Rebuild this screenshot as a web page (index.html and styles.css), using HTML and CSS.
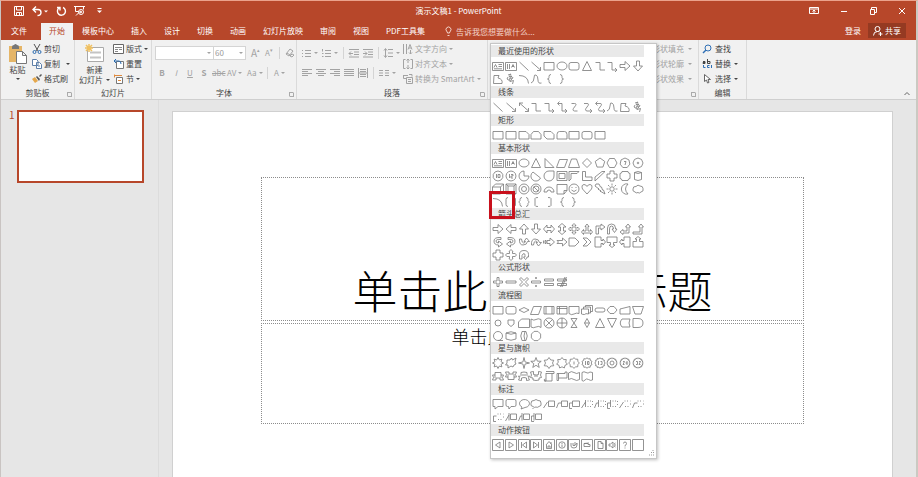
FILE: index.html
```html
<!DOCTYPE html>
<html lang="zh-CN">
<head>
<meta charset="utf-8">
<title>演示文稿1 - PowerPoint</title>
<link rel="stylesheet" href="styles.css">
</head>
<body>
<div class="window">
<header class="titlebar">
  <div class="quick">
    <button class="ic q-save" aria-label="保存"><svg width="10" height="10" viewBox="0 0 10 10"><path d="M.5.5h9v9h-9zM2.500.5v3.500h5v-3.500M2.500 9.500v-3h5v3M5.500 7v2"/></svg></button>
    <button class="ic q-undo" aria-label="撤消"><svg width="16" height="10" viewBox="0 0 16 10"><path d="M4 .5l-3 3 3 3M1 3.500h5q3 0 3 3t-3.500 3" stroke-width="1.400"/><path class="fill" d="M12 4.500h4l-2 2z"/></svg></button>
    <button class="ic q-redo" aria-label="重复"><svg width="10" height="10" viewBox="0 0 10 10"><path d="M3 2a4 4 0 1 0 4-.5M1 1.500h3v3" stroke-width="1.400"/></svg></button>
    <button class="ic q-show" aria-label="从头开始放映"><svg width="11" height="10" viewBox="0 0 11 10"><path d="M0 .5h11M1.500.5v5h3M9.500.5v3M2 9.500l3-3"/><circle cx="7" cy="6" r="2.500"/><path d="M6 5v2l2-1z"/></svg></button>
    <button class="ic q-more" aria-label="自定义快速访问工具栏"><svg width="5" height="6" viewBox="0 0 5 6"><path d="M.5.5h4"/><path class="fill" d="M0 2.500h5l-2.500 2.500z"/></svg></button>
  </div>
  <h1 class="doc">演示文稿1 - PowerPoint</h1>
  <div class="sys">
    <button class="ic" aria-label="功能区显示选项"><svg width="10" height="8" viewBox="0 0 10 8"><path d="M.5.5h9v6h-9zM.5 2h9M5 6V3M3.500 4.500l1.500-1.500 1.500 1.500"/></svg></button>
    <button class="ic" aria-label="最小化"><svg width="8" height="8" viewBox="0 0 8 8"><path d="M1 4.500h6"/></svg></button>
    <button class="ic" aria-label="向下还原"><svg width="8" height="8" viewBox="0 0 8 8"><path d="M1.500 2.500h4v5h-4zM2.500 2.500v-2h5v5h-2"/></svg></button>
    <button class="ic" aria-label="关闭"><svg width="8" height="8" viewBox="0 0 8 8"><path d="M1 1l6 6M7 1l-6 6"/></svg></button>
  </div>
</header>
<nav class="tabs">
  <a href="#" class="tab file">文件</a>
  <a href="#" class="tab active">开始</a>
  <a href="#" class="tab">模板中心</a>
  <a href="#" class="tab">插入</a>
  <a href="#" class="tab">设计</a>
  <a href="#" class="tab">切换</a>
  <a href="#" class="tab">动画</a>
  <a href="#" class="tab">幻灯片放映</a>
  <a href="#" class="tab">审阅</a>
  <a href="#" class="tab">视图</a>
  <a href="#" class="tab">PDF工具集</a>
  <a href="#" class="tab tell"><svg width="7" height="9" viewBox="0 0 7 9"><path d="M2.500 6q0-1-1-2a2.500 2.500 0 1 1 4 0q-1 1-1 2zM2.500 8.500h2"/></svg>告诉我您想要做什么...</a>
  <span class="account">
    <a href="#" class="login">登录</a>
    <button class="share"><svg width="10" height="10" viewBox="0 0 10 10"><circle cx="4.500" cy="3" r="2.500"/><path d="M.5 9.500q0-4 4-4 1.500 0 2 .5M7.500 6v4M5.500 8h4"/></svg>共享</button>
  </span>
</nav>
<div class="ribbon">
  <section class="group g-clip">
    <div class="tools">
      <button class="big"><svg width="19" height="20" viewBox="0 0 19 20"><path fill="#e5b567" d="M1 2h13v16H1z"/><path fill="#777" d="M4 3q0-2 2-2 1.500-2 3 0 2 0 2 2v2H4z"/><path fill="#fff" stroke="#777" d="M8.500 7.500h6l4 4v8h-10zM14.500 7.500v4h4"/></svg><span>粘贴</span><i class="dd"></i></button>
      <div class="stack">
        <button class="sm"><svg width="10" height="10" viewBox="0 0 10 10"><path stroke="#555" d="M2 0l4 7M8 0L4 7"/><circle cx="2.500" cy="8" r="1.500" stroke="#2b6cb0"/><circle cx="7.500" cy="8" r="1.500" stroke="#2b6cb0"/></svg>剪切</button>
        <button class="sm wide"><svg width="10" height="10" viewBox="0 0 10 10"><path fill="#fff" stroke="#5d7fa8" d="M.5.5h4l1.500 1.500v4.500h-5.500zM4.500 3.500h3l2 2v4h-5z"/><path stroke="#5d7fa8" d="M6 7h2"/></svg>复制<i class="dd"></i></button>
        <button class="sm"><svg width="10" height="10" viewBox="0 0 10 10"><path fill="#e5a84c" d="M0 5l3-2 3 4-3 2z"/><path fill="#555" d="M4 3l1-1 3 3-1 2zM7 2l2-2 1 1-2 2z"/></svg>格式刷</button>
      </div>
    </div>
    <h2>剪贴板</h2><span class="launch"></span>
  </section>
  <section class="group g-slides">
    <div class="tools">
      <button class="big new"><svg width="20" height="18" viewBox="0 0 20 18"><path fill="#fff" stroke="#aaa" d="M2.500 3.500h16v14h-16z"/><path stroke="#c4c4c4" d="M5 8.500h11M5 13.500h11" stroke-width="2"/><path stroke="#f0c060" stroke-width="1.500" d="M4 0v8M0 4h8M1 1l6 6M7 1L1 7"/></svg><span>新建</span><span>幻灯片<i class="dd"></i></span></button>
      <div class="stack">
        <button class="sm"><svg width="11" height="10" viewBox="0 0 11 10"><path fill="#fff" stroke="#666" d="M.5.5h10v9H.5z"/><path stroke="#888" d="M2 3.500h7M2 5.500h3M6 5.500h3M2 7.500h3"/></svg>版式<i class="dd"></i></button>
        <button class="sm"><svg width="11" height="10" viewBox="0 0 11 10"><path fill="#fff" stroke="#777" d="M3.500 2.500h7v7h-7z"/><path stroke="#2b6cb0" d="M3 0L1 2l2 2M1 2h5q2 0 2 3"/></svg>重置</button>
        <button class="sm"><svg width="11" height="10" viewBox="0 0 11 10"><path fill="#fff" stroke="#777" d="M3.500 3.500h6v6h-6z"/><path stroke="#e08a3c" d="M1.500.5v3M1 1.500h8M5 6.500h3"/></svg>节<i class="dd"></i></button>
      </div>
    </div>
    <h2>幻灯片</h2>
  </section>
  <section class="group g-font off">
    <div class="rows">
      <div class="row">
        <label class="combo face"><select aria-label="字体" disabled><option></option></select><i class="dd"></i></label>
        <label class="combo size"><select aria-label="字号" disabled><option>60</option></select><i class="dd"></i></label>
        <button class="t grow" aria-label="增大字号">A<sup>▴</sup></button>
        <button class="t shrink" aria-label="减小字号">A<sup>▾</sup></button>
        <span class="vr"></span>
        <button class="t clear" aria-label="清除格式"><svg width="9" height="10" viewBox="0 0 9 10"><path d="M1 6l4-5 3 2-4 5zM2 5l3 2M5 8l2-2 2 1-2 2z"/></svg></button>
      </div>
      <div class="row marks">
        <button class="t mark"><b>B</b></button><button class="t mark"><em>I</em></button><button class="t mark"><u>U</u></button><button class="t mark"><b>S</b></button><button class="t strike"><s>abc</s></button><button class="t menu-btn">AV<i class="dd"></i></button><button class="t menu-btn">Aa<i class="dd"></i></button><span class="vr"></span><button class="t color">A<i class="dd"></i></button>
      </div>
    </div>
    <h2>字体</h2><span class="launch"></span>
  </section>
  <section class="group g-para off">
    <div class="tools">
    <div class="rows">
      <div class="row">
        <button class="t" aria-label="项目符号"><svg width="9" height="9" viewBox="0 0 9 9"><path d="M0 1.500h1M3 1.500h6M0 4.500h1M3 4.500h6M0 7.500h1M3 7.500h6"/></svg><i class="dd"></i></button>
        <button class="t" aria-label="编号"><svg width="9" height="9" viewBox="0 0 9 9"><path d="M.5 0v2.500M3 1.500h6M0 4.500h1.500M3 4.500h6M0 7.500h1.500M3 7.500h6"/></svg><i class="dd"></i></button>
        <span class="vr"></span>
        <button class="t" aria-label="减少缩进"><svg width="10" height="9" viewBox="0 0 10 9"><path d="M0 .5h10M5 3h5M5 5.500h5M0 8h10M4 4.500H0M2 2.500l-2 2 2 2"/></svg></button>
        <button class="t" aria-label="增加缩进"><svg width="10" height="9" viewBox="0 0 10 9"><path d="M0 .5h10M5 3h5M5 5.500h5M0 8h10M0 4.500h4M2 2.500l2 2-2 2"/></svg></button>
        <span class="vr"></span>
        <button class="t" aria-label="行距"><svg width="9" height="10" viewBox="0 0 9 10"><path d="M1.500 1v8M0 2.500l1.500-2 1.500 2M0 7.500l1.500 2 1.500-2M4 1.500h5M4 5h5M4 8.500h5"/></svg><i class="dd"></i></button>
      </div>
      <div class="row">
        <button class="t" aria-label="左对齐"><svg width="10" height="8" viewBox="0 0 10 8"><path d="M0 .5h10M0 2.500h6M0 4.500h10M0 6.500h6"/></svg></button>
        <button class="t" aria-label="居中"><svg width="10" height="8" viewBox="0 0 10 8"><path d="M0 .5h10M2 2.500h6M0 4.500h10M2 6.500h6"/></svg></button>
        <button class="t" aria-label="右对齐"><svg width="10" height="8" viewBox="0 0 10 8"><path d="M0 .5h10M4 2.500h6M0 4.500h10M4 6.500h6"/></svg></button>
        <button class="t" aria-label="两端对齐"><svg width="10" height="8" viewBox="0 0 10 8"><path d="M0 .5h10M0 2.500h10M0 4.500h10M0 6.500h10"/></svg></button>
        <button class="t" aria-label="分散对齐"><svg width="10" height="10" viewBox="0 0 10 10"><path d="M.5 0v10M9.500 0v10M2 1.500h6M2 3.500h6M2 6.500h6M2 8.500h6M0 5h10"/></svg></button>
        <span class="vr"></span>
        <button class="t" aria-label="分栏"><svg width="10" height="6" viewBox="0 0 10 6"><path d="M0 .5h4M6 .5h4M0 3h4M6 3h4M0 5.500h4M6 5.500h4"/></svg><i class="dd"></i></button>
      </div>
    </div>
    <div class="stack">
      <button class="sm"><svg width="10" height="10" viewBox="0 0 10 10"><path d="M.5 0v10M3.500 0v10M5 5.500l2-5 2 5M6 4h2M7.500 6v4M6 8.500l1.500 1.500L9 8.500"/></svg>文字方向<i class="dd"></i></button>
      <button class="sm"><svg width="10" height="10" viewBox="0 0 10 10"><path d="M2.500.5h-2v9h2M7.500.5h2v9h-2M5 0v4M3.500 1.500L5 0l1.500 1.500M5 10V6M3.500 8.500L5 10l1.500-1.500"/></svg>对齐文本<i class="dd"></i></button>
      <button class="sm"><svg width="10" height="10" viewBox="0 0 10 10"><path d="M0 1.500h5M.5 1.500v3h3M3.500 3.500h6v6h-6zM5 5.500h3M5 7.500h3M6 .5h3v2"/></svg>转换为 SmartArt<i class="dd"></i></button>
    </div>
    </div>
    <h2>段落</h2><span class="launch"></span>
  </section>
  <section class="group g-draw off">
    <div class="stack">
      <button class="sm">形状填充<i class="dd"></i></button>
      <button class="sm">形状轮廓<i class="dd"></i></button>
      <button class="sm">形状效果<i class="dd"></i></button>
    </div>
    <span class="launch"></span>
    <div class="menu" id="shape-menu"></div>
  </section>
  <section class="group g-edit">
    <div class="stack">
      <button class="sm"><svg width="10" height="10" viewBox="0 0 10 10"><circle cx="6" cy="4" r="3" stroke="#2f6fb5"/><path stroke="#2f6fb5" stroke-width="1.500" d="M4 6L1 9"/></svg>查找</button>
      <button class="sm wide"><svg width="10" height="10" viewBox="0 0 10 10"><path stroke="#444" d="M1 2.500h2v2H1v-1h2M5.500 0v4.500h2.500v-2H6"/><path stroke="#2f6fb5" d="M1.500 6v2.500h2M7.500 6.500h-2v2h2M9.500 6v3"/></svg>替换<i class="dd"></i></button>
      <button class="sm"><svg width="10" height="10" viewBox="0 0 10 10"><path fill="#fff" stroke="#666" d="M2.500.5v7l2-1.500 1 3 1.500-.5-1-3h2.500z"/></svg>选择<i class="dd"></i></button>
    </div>
    <h2>编辑</h2>
  </section>
  <button class="collapse" aria-label="折叠功能区"><svg width="6" height="5" viewBox="0 0 6 5"><path d="M.5 4L3 1.500 5.500 4"/></svg></button>
</div>
<main class="work">
  <aside class="thumbs"><span class="num">1</span><a href="#" class="thumb" aria-label="幻灯片 1"></a></aside>
  <article class="slide">
    <div class="holder title">单击此处添加标题</div>
    <div class="holder subtitle">单击此处添加副标题</div>
  </article>
</main>
</div>
<script src="shapes.js"></script>
</body>
</html>
```
FILE: shapes.js
```js
// Every shape is a path on a 12 x 12 grid.
const circle = (r, x = 6, y = 6) =>
  `M${x - r} ${y}a${r} ${r} 0 1 0 ${2 * r} 0a${r} ${r} 0 1 0 ${-2 * r} 0`;
const polygon = (n, r, turn = 0) => {
  let d = '';
  for (let i = 0; i < n; i++) {
    const a = (i / n) * 2 * Math.PI - Math.PI / 2 + turn;
    d += `${i ? 'L' : 'M'}${(6 + r * Math.cos(a)).toFixed(2)} ${(6 + r * Math.sin(a)).toFixed(2)}`;
  }
  return d + 'z';
};
const star = (n, outer, inner) => {
  let d = '';
  for (let i = 0; i < 2 * n; i++) {
    const a = (i / n) * Math.PI - Math.PI / 2;
    const r = i % 2 ? inner : outer;
    d += `${i ? 'L' : 'M'}${(6 + r * Math.cos(a)).toFixed(2)} ${(6 + r * Math.sin(a)).toFixed(2)}`;
  }
  return d + 'z';
};
const box = 'M1 2.500h10v7.500H1z';
const frame = 'M.5 .5h11v11H.5z';

const S = {
  textH: 'M.5 2.500h11v8H.5zM2 7.500l1.500-3 1.500 3M6.500 4.500h3.500M6.500 6.500h3.500M2 8.800h8',
  textV: 'M.5 2.500h11v8H.5zM2.500 4v5M4.500 4v5M6.500 7.500l1.500-3 1.500 3M7 6.500h2',
  line: 'M1.500 2l9 8.500', arrow: 'M1.500 2l9 8M10.500 7v3.500h-3.500', arrow2: 'M1.500 2l9 8M10.500 7v3.500h-3.500M1.500 5V2h3.500',
  rect: box, oval: 'M1 6a5 4 0 1 0 10 0a5 4 0 1 0-10 0',
  round: 'M3 2.500h6q2 0 2 2v3.500q0 2-2 2H3q-2 0-2-2V4.500q0-2 2-2z',
  tri: 'M6 1.500l4.500 9h-9z', elbow: 'M1.500 2.500h4.500v7.500h5', elbowA: 'M1.500 2.500h4.500v7.500h4.500M9 8l2 2-2 2',
  elbow2: 'M2 2.500h4v7.500h4.500M9 8l2 2-2 2M3.500 .5l-2 2 2 2',
  right: 'M1 4.500h5v-3l5 4.500-5 4.500v-3H1z', left: 'M11 4.500H6v-3L1 6l5 4.500v-3h5z',
  down: 'M4.500 1v5h-3L6 11l4.500-5h-3V1z', up: 'M4.500 11V6h-3L6 1l4.500 5h-3v5z',
  free: 'M2 2.500h5l-1 2.500q5 1 4 5.500H1.500z', scribble: 'M3 2l3-1-2 3 3-1-3 3.500 4-2-3 4 3.500-1-1 3.500M3 4l-1 2 3 2',
  arc: 'M1 2.500q9 0 9.500 8', curve: 'M1 10q3-1 3-5t2-3 2 5 3.500 3',
  lbrace: 'M8 1.500q-2 0-2 2v1q0 1.500-1.500 1.500 1.500 0 1.500 1.500v1q0 2 2 2', rbrace: 'M4 1.500q2 0 2 2v1q0 1.500 1.500 1.500-1.500 0-1.500 1.500v1q0 2-2 2',
  cv: 'M3.500 2.500h3q3 0 0 3.500t0 4h3', cvA: 'M3 2.500h3q3 0 0 3.500t0 4h4M9 8l2 2-2 2', cv2: 'M2 2.500h4q3 0 0 3.500t0 4h4M9 8l2 2-2 2M3.500 .5l-2 2 2 2',
  snip1: 'M1 2.500h7l3 3v4.500H1z', snip2: 'M3.500 2.500h5l2.500 3v4.500H1V5.500z', snipD: 'M1 2.500h7l3 3v4.500H4l-3-3z',
  rnd2: 'M3.500 2.500h5q2.500 0 2.500 3v4.500H1V5.500q0-3 2.500-3z',
  rtri: 'M2 1.500v9h9z', para: 'M3.500 2.500h8l-3 8h-8z', trap: 'M3.500 2h5l3 8.500H.5z', dia: 'M6 1.500l4.500 4.500-4.500 4.500-4.500-4.500z',
  pent: polygon(5, 5), hex: 'M3.500 1.500h5L11 6l-2.500 4.500h-5L1 6z', hept: polygon(7, 5) + 'M5 4.500h2L6 8', oct: polygon(8, 5) + circle(.8),
  dec: polygon(10, 5) + 'M4.500 4v4M6 4.500h2v3H6z', dode: polygon(12, 5) + 'M4.500 4v4M6 4.500h2v1.500H6v2h2',
  pie: 'M6 1v5h5a5 5 0 1 1-5-5z', chord: 'M3 2a5 5 0 1 0 7.500 6z', tear: 'M11 1v5a5 5 0 1 1-5-5z',
  frm: 'M1 1.500h10v9H1zM3 3.500h6v5H3z', half: 'M1 11V1.500h10l-2 2H3V9z', ell: 'M1.500 1.500h3V7H11v3.500H1.500z', diag: 'M1 11V7l7-5.500h3z',
  plus: 'M4 1h4v3h3v4H8v3H4V8H1V4h3z', plaque: 'M3 1.500h6q0 2 2 2v5q-2 0-2 2H3q0-2-2-2v-5q2 0 2-2z',
  can: 'M2.500 2.500q3.500-2 7 0v7q-3.500 2-7 0zM2.500 2.500q3.500 2 7 0', cube: 'M.5 4h8v7h-8zM.5 4l3-3h8l-3 3M11.500 1v7l-3 3',
  bevel: 'M1 1h10v10H1zM3 3h6v6H3zM1 1l2 2M11 1l-2 2M1 11l2-2M11 11l-2-2', donut: circle(5) + circle(2.5), no: circle(5) + circle(3) + 'M4 4l4 4',
  barc: 'M1 9a5 5 0 0 1 10 0H8a2 2 0 0 0-4 0z', fold: 'M1 1.500h10v6l-3 3.500H1zM8 11V7.500h3', smile: circle(5) + 'M4 4v1M8 4v1M3.500 7q2.500 3 5 0',
  heart: 'M6 11L1.500 6Q0 2 3 1.500q2 0 3 2 1-2 3-2 3 .5 1.500 4.500z', bolt: 'M2 1l3 0 1.500 3h1l1 3h1L11 11 6 8h1L4 6h1L1 3z',
  sun: circle(2.2) + 'M6 .5v2M6 9.500v2M.5 6h2M9.500 6h2M2 2l1.500 1.500M8.500 8.500l1.500 1.500M10 2L8.500 3.500M2 10l1.500-1.500', moon: 'M9 1a5.200 5.200 0 1 0 0 10Q4 6 9 1z',
  cloud: 'M3 9Q0 8 1 6q0-3 3-2.500 2-2.500 4-.5 3 0 3 2.500 1 3-2 3.500-2 2-3 .5-2 1-3-.5z',
  bracks: 'M3 1.500q-2 0-2 2v5q0 2 2 2M8 1.500q2.500 0 2.500 1v7q0 1-2.500 1', braces: 'M4 1.500q-2 0-2 2v1L.8 6 2 7.500v1q0 2 2 2M8 1.500q2 0 2 2v1L11.200 6 10 7.500v1q0 2-2 2',
  lbrack: 'M8 1.500q-3 0-3 1v7q0 1 3 1', rbrack: 'M5 1.500q3 0 3 1v7q0 1-3 1',
  lr: 'M4 2L.5 6 4 10V7.500h4V10l3.500-4L8 2v2.500H4z', ud: 'M2 4L6 .5 10 4H7.500v4H10l-4 3.500L2 8h2.500V4z',
  quad: 'M6 .5l2 2H7v2.500h2.500V4l2 2-2 2V7H7v2.500h1l-2 2-2-2h1V7H2.500v1l-2-2 2-2v1H5V2.500H4z', tri3: 'M6 1l2 2.500H7V8h2.500V6.500L11.500 9l-2 2.500V10h-7v1.500L.5 9l2-2.500V8H5V3.500H4z',
  bent: 'M2 11V3h5V1l4 3-4 3V5H4.500v6z', uturn: 'M1.500 11V5q0-4 4-4t4 4v1H11L8.500 9.500 6 6h1.500q0-3-2-3t-2 3v5z',
  leftup: 'M9 1l2.500 3H10v6H4v1.500L1 9l3-2.500V8h4V4H6.500z', bentup: 'M9 1l2.500 3H10v7H1V9h7V4H6.500z',
  cr: 'M9 1.500Q2 1 2 5t4.500 4v2l4-3-4-3v2Q4 7 4 5t5-1.500z', cl: 'M3 1.500q7-.5 7 3.500t-4.500 4v2l-4-3 4-3v2Q8 7 8 5T3 3.500z', cu: 'M1.500 3q-.5 6 3.500 6t4.500-3.500h2L8.500 2 6 5.500h1.500Q7 7 5.500 7T3.500 3z', cd: 'M1.500 9Q1 3 5 3t4.500 3.500h2L8.500 10 6 6.500h1.500Q7 5 5.500 5t-2 4z',
  stripe: 'M.5 4.500v3M2 4.500v3h1v-3zM4 4.500h3V2l4.500 4L7 10V7.500H4z', notch: 'M1 4.500h5.500V2L11 6l-4.500 4V7.500H1L2.500 6z',
  penta: 'M1 2h6l4 4-4 4H1z', chev: 'M2 2h4l4 4-4 4H2l4-4z', rcall: 'M1 1h6v3.500h2V3l2.500 3L9 9V7.500H7V11H1z', dcall: 'M1 1h10v5.500H7.500V9H9l-3 2.500L3 9h1.500V6.500H1z',
  lcall: 'M11 1H5v3.500H3V3L.5 6 3 9V7.500h2V11h6z', ucall: 'M1 11h10V5.500H7.500V3H9L6 .5 3 3h1.500v2.500H1z', circA: 'M1.500 10V5.500q0-4 4.500-4t4.500 4V8H9q0 2-1.500 2.500L5.500 8H7V6.500Q7 4.500 6 4.500T4 6.500V10z',
  cross4: 'M6 .5l2 2h-.5v2h2V4l2 2-2 2v-.5h-2v2H8l-2 2-2-2h.5v-2h-2V8l-2-2 2-2v.5h2v-2H4z',
  mathplus: 'M5 1.500h2V5h3.500v2H7v3.500H5V7H1.500V5H5z',
  minus: 'M1 5h10v2H1z', times: 'M3 1.500l3 3 3-3 1.500 1.500-3 3 3 3L9 10.500l-3-3-3 3L1.500 9l3-3-3-3z', divide: 'M1.500 5h9v2h-9zM5.500 1.500h1v1h-1zM5.500 9.500h1v1h-1z',
  equal: 'M1.500 3h9v2h-9zM1.500 7.500h9v2h-9z', neq: 'M1.500 3h9v2h-9zM1.500 7.500h9v2h-9zM9 1L4.500 11M10.500 1L6 11',
  dec2: 'M6 3.500L11 6 6 8.500 1 6z', pre: box + 'M3 2.500v7.500M9 2.500v7.500', inter: box + 'M3.500 2.500v7.500M1 4.500h10', doc: 'M1 2.500h10v7q-2.500-1-5 .5T1 9.500z',
  docs: 'M.5 5h7v5q-3-1-4 .5-2 0-3-.5zM2.500 5V3h7v6h-2M4.500 3V1.500h7v6h-2', term: 'M3 4h6q2 0 2 2t-2 2H3Q1 8 1 6t2-2z', prep: 'M4 2.500h4L11 6 8 9.500H4L1 6z',
  manual: 'M1 5l10-2.500V10H1z', mop: 'M.5 2.500h11L9 10H3z', conn: circle(3), off: 'M3 3h6v4L6 9.500 3 7z', card: 'M3.500 2h8v8.500H.5V5z',
  tape: 'M1 2q3 2 5 .5t5 0v8q-2-2-5-.5t-5 0z', sum: circle(5) + 'M2.500 2.500l7 7M9.500 2.500l-7 7', or: circle(5) + 'M6 1v10M1 6h10', coll: 'M3 1.500h6l-6 9h6z',
  sort: 'M6 1.500L8.500 6 6 10.500 3.500 6zM3.500 6h5', merge: 'M1.500 1.500h9L6 10.500z', stored: 'M3 2h8q-2 4 0 8H3Q-.5 6 3 2z', delay: 'M1 1.500h5q5 0 5 4.500t-5 4.500H1z',
  seq: circle(4.5) + 'M6 10.500h5', disk: 'M1 3q5-2.500 10 0v6q-5 2.500-10 0zM1 3q5 2.500 10 0', direct: 'M4 1.500h4q2.500 4.500 0 9H4q-2.500-4.500 0-9zM7 1.500q-2 4.500 0 9', disp: polygon(8, 5, Math.PI / 8),
  ex1: star(8, 5.5, 3.3), ex2: 'M2 3h3l1.500-2 1 2L11 1l-1 4 1 2-2 1-1 2-2-1-3 2v-3L.5 8 2 6z', s4: star(4, 5.5, 1.5), s5: star(5, 5.5, 2.3), s6: star(6, 5.5, 3.5), s7: star(7, 5.5, 3.8),
  s8: star(8, 5.3, 4.2) + 'M6 4.500v3', s10: star(10, 5.3, 4.2) + 'M4.500 4v4M6.500 4.500h1.500v3H6.500z', s12: star(12, 5.3, 4.2) + 'M4.500 4v4M6.500 4.500h1.500v3H6.500', s16: star(16, 5.3, 4.3) + circle(2),
  s24: star(16, 5.3, 4.3) + 'M4 4.500h1.500L4 7.500h1.500M8 4v4M6.500 6h2', s32: star(16, 5.3, 4.3) + 'M4 4.500h1.500v3H4M7 4.500h1.500L7 7.500h1.500',
  ribU: 'M.5 5H3V2.500h6V5h2.500l-1 2.500 1 2.500H8V8H4v2H.5l1-2.500zM3 5v3M9 5v3', ribD: 'M.5 2H4v2h4V2h3.500l-1 2.500 1 2.500H9v2.500H3V7H.5l1-2.500zM3 7V4M9 7V4', cribU: 'M.5 6q2 1 2.500-.5v-3q3-1 6 0v3q.5 1.500 2.500.5l-1 2 1 2-3 .5v-2.500q-2.500-1-5 0v2.500L.5 10l1-2zM4 5h4',
  cribD: 'M.5 2l3-.5v3q3 1 5 0v-3l3 .5-1 3 1 2.500-2.500.5v2q-3 1-6 0v-2L.5 7.500l1-2.500zM4 6h4', vscroll: 'M3 3v8H1.500q-1-2 1-2M3 1.500h8v2H9V11H1.500M3 3.500h6', hscroll: 'M1 3.500h8V2h2v6H2.500v2.500H1zM2.500 3.500V8', wave: 'M.5 3q3-2.500 5.500-.5t5.500 0v7q-3 2-5.500 0t-5.500 0z', dwave: 'M1 2.500q2-1.500 4 0t4-.5l2.500.5v7.500q-2 1-4-.5T4 10t-3 .5z',
  callR: 'M1 1.500h10v7H6L3 11V8.500H1z', callRR: 'M2.500 1.500h7Q11 1.500 11 3v4q0 1.500-1.500 1.500H6L4 11 3.500 8.500h-1Q1 8.500 1 7V3q0-1.500 1.500-1.500z', callO: 'M4 9a5 4 0 1 1 3 .5L3 11z',
  callC: 'M3 8.500Q0 8 1 5.500 1 2 4 2.500q2-2 4 0 3-.5 3 2.500 1 3-2 3.500-2 1.500-3 .5-2 1-3-.5M2.500 10.500h1',
  l1: 'M5.500 3h6v5.500h-6zM.5 10l4-6', l2: 'M5.500 3h6v5.500h-6zM.5 10l2-5h3', l3: 'M4.500 3h7v5.500h-7zM4.500 5H1.500v5.500H4',
  a1: 'M4.500 2v7M6.500 3h1M9 3h1M11.500 3v1M11.500 6v1M6.500 8.500h1M9 8.500h1M.5 10l4-6', a2: 'M4.500 2v7M6.500 3h1M9 3h1M11.500 3v1M11.500 6v1M6.500 8.500h1M9 8.500h1M.5 10l2-5h2', a3: 'M4.500 2v7M6.500 3h1M9 3h1M11.500 3v1M11.500 6v1M6.500 8.500h1M9 8.500h1M4.500 5H1.500v5.500H4',
  d1: 'M5.500 3h1M8 3h1M11 3h.5M11.500 5.500v1M6 8.500h1M8.500 8.500h1M.5 10l4-6', d2: 'M5.500 3h1M8 3h1M11 3h.5M11.500 5.500v1M6 8.500h1M8.500 8.500h1M.5 10l2-5h3', d3: 'M5.500 3h1M8 3h1M11 3h.5M11.500 5.500v1M6 8.500h1M8.500 8.500h1M4.500 5H1.500v5.500H4',
  b1: 'M5.500 3h6v5.500h-6zM4 2v7.500M.5 10l3.500-6', b2: 'M5.500 3h6v5.500h-6zM4 2v7.500M.5 10l2-5H4', b3: 'M5.500 3h6v5.500h-6zM4 2v7.500M4 5H1.500v5.500H4',
  aPrev: frame + 'M8 3v6L3.500 6z', aNext: frame + 'M4 3v6l4.500-3z', aFirst: frame + 'M8.500 3v6L4.500 6zM3.500 3v6', aLast: frame + 'M3.500 3v6l4-3zM8.500 3v6', aHome: frame + 'M3 6l3-3.500L9 6M3.500 6v3.500h5V6M5 9V7h2v2M8 3v2',
  aInfo: frame + circle(3.2) + 'M6 4v1M6 5.500V8', aBack: frame + 'M3 4v3q0 2 3 2t3-3V4L7.500 6M5 4v2.500h2V3', aMovie: frame + 'M3 4.500h4v1h2v2H3zM3 4.500L8 4', aDoc: frame + 'M4 2.500h3l2 2v5H4zM7 2.500v2h2', aSound: frame + 'M3 5h1.500L7 3v6L4.500 7H3zM8 5l1.500-1M8 6h2M8 7l1.500 1', aHelp: frame + 'M4.500 4.500q0-1.500 1.500-1.500t1.500 1.500Q7.500 6 6 6.500v1M6 8.500v1', aBlank: frame,
};

const sections = [
  ['最近使用的形状', 'textH textV line arrow rect oval round tri elbow elbowA right down free scribble arc curve lbrace rbrace'],
  ['线条', 'line arrow arrow2 elbow elbowA elbow2 cv cvA cv2 curve free scribble'],
  ['矩形', 'rect rect snip1 snip2 snipD rnd2 rect round rect'],
  ['基本形状', 'textH textV oval tri rtri para trap dia pent hex hept oct dec dode pie chord tear frm half ell diag plus plaque can cube bevel donut no barc fold smile heart bolt sun moon cloud arc* bracks braces lbrack rbrack lbrace rbrace'],
  ['箭头总汇', 'right left up down lr ud quad tri3 bent uturn leftup bentup cr cl cu cd stripe notch penta chev rcall dcall lcall ucall plus cross4 circA'],
  ['公式形状', 'mathplus minus times divide equal neq'],
  ['流程图', 'rect round dec2 para pre inter doc docs term prep manual mop conn off card tape sum or coll sort tri merge stored delay seq disk direct disp'],
  ['星与旗帜', 'ex1 ex2 s4 s5 s6 s7 s8 s10 s12 s16 s24 s32 ribU ribD cribU cribD vscroll hscroll wave dwave'],
  ['标注', 'callR callRR callO callC l1 l2 l3 a1 a2 a3 d1 d2 d3 b1 b2 b3'],
  ['动作按钮', 'aPrev aNext aFirst aLast aHome aInfo aBack aMovie aDoc aSound aHelp aBlank'],
];

document.getElementById('shape-menu').innerHTML = sections.map(([name, list]) => {
  const names = list.split(' ');
  const tall = names.length > 24 ? ' tall' : '';
  const cells = names.map((n) => {
    const marked = n.endsWith('*');
    const key = n.replace('*', '');
    return `<button class="shape${marked ? ' marked' : ''}" aria-label="${name}"><svg width="12" height="12" viewBox="0 0 12 12"><path d="${S[key]}"/></svg></button>`;
  }).join('');
  return `<h3>${name}</h3><div class="shapes${tall}">${cells}</div>`;
}).join('') + '<svg class="grip" width="6" height="6" viewBox="0 0 6 6"><path d="M5 0v1M3 2.500h1M5 2.500h1M1 5h1M3 5h1M5 5h1"/></svg>';
```
FILE: styles.css
```css
* { box-sizing: border-box; }
:root { --brand: #b7472a; --ink: #444; --dim: #a3a3a3; }
body {
  margin: 0;
  font: 8px/12px "Noto Sans CJK SC", "Noto Sans", sans-serif;
  color: var(--ink);
}
h1, h2, h3 { margin: 0; font-size: 8px; font-weight: 400; }
button, select { font: inherit; color: inherit; border: 0; padding: 0; margin: 0; background: none; }
a { color: inherit; text-decoration: none; }
svg { display: block; fill: none; stroke: currentColor; flex: none; overflow: visible; }
svg [fill]:not([stroke]) { stroke: none; }
svg .fill { fill: currentColor; stroke: none; }

.window {
  display: flex;
  flex-direction: column;
  height: 100vh;
  overflow: hidden;
  border-top: 1px solid #eba28c;
  border-left: 1px solid #c9c4c2;
  border-right: 2px solid #cbc9c2;
  background: #e6e6e6;
}

.titlebar {
  display: grid;
  grid-template-columns: 1fr auto 1fr;
  align-items: center;
  height: 20px;
  background: var(--brand);
  color: #fff;
}
.quick { display: flex; align-items: center; padding-left: 13px; gap: 8px; }
.quick .q-more { margin-left: 4px; }
.sys { display: flex; justify-content: flex-end; align-items: center; gap: 21px; padding-right: 10px; }

.tabs {
  display: flex;
  align-items: stretch;
  gap: 1px;
  height: 19px;
  padding: 2px 10px 0 2px;
  background: var(--brand);
  color: #fff;
}
.tab { padding: 0 8px; line-height: 15px; white-space: nowrap; }
.tab.file { margin-right: 5px; }
.tab.active { background: #f1f1f1; color: var(--brand); }
.tab.tell { display: flex; align-items: center; gap: 4px; padding-left: 11px; color: #f3d3c9; }
.account { display: flex; align-items: flex-start; gap: 7px; margin-left: auto; }
.login, .share { line-height: 15px; }
.share { display: flex; align-items: center; gap: 2px; padding: 0 5px; background: #953a22; }

.ribbon {
  position: relative;
  display: flex;
  height: 60px;
  background: #f1f1f1;
  border-bottom: 1px solid #cfcfcf;
  white-space: nowrap;
}
.group {
  position: relative;
  display: flex;
  flex-direction: column;
  justify-content: space-between;
  border-right: 1px solid #dadada;
}
.group h2 { text-align: center; line-height: 12px; }
.group.off .tools, .group.off .rows, .group.off .stack { color: var(--dim); }
.g-clip { min-width: 74px; }
.g-slides { min-width: 77px; }
.g-font { min-width: 145px; }
.g-para { min-width: 191px; }
.g-draw { min-width: 211px; }
.g-draw .stack { align-self: flex-end; padding-right: 6px; }
.g-edit { min-width: 48px; }
.tools { display: flex; }
.stack { display: flex; flex-direction: column; padding-top: 1px; }
.sm { display: flex; align-items: center; gap: 2px; height: 15px; text-align: left; }
.g-clip .wide .dd { margin-left: 4px; }
.g-clip .stack { padding-left: 5px; }
.g-slides .stack { padding-left: 3px; }
.g-para .stack { padding-left: 3px; }
.g-para .stack .dd, .g-slides .stack .dd { margin-left: 0; }
.g-edit .stack { padding-left: 3px; }
.g-edit .sm { gap: 3px; }
.g-edit .sm .dd { margin-left: 0; }
.big { display: flex; flex-direction: column; align-items: center; padding: 4px 0 0 7px; line-height: 10px; }
.big > svg { margin-bottom: 1px; }
.big.new { padding-left: 4px; }
.big.new > svg { margin-bottom: 3px; }
.big .dd { margin: 3px 0 0; }
.big span .dd { margin: 0 0 2px 3px; }
.dd {
  display: inline-block;
  flex: none;
  width: 0;
  height: 0;
  border: 2px solid transparent;
  border-top-color: currentColor;
  border-bottom: 0;
  margin-left: 2px;
}
.launch {
  position: absolute;
  right: 2px;
  bottom: 2px;
  width: 5px;
  height: 5px;
  border: 1px solid #aaa;
  border-right-color: transparent;
  border-bottom-color: transparent;
}
.launch::after {
  content: "";
  position: absolute;
  right: -1px;
  bottom: -1px;
  width: 3px;
  height: 3px;
  border: solid #aaa;
  border-width: 0 1px 1px 0;
}

.rows { display: flex; flex-direction: column; gap: 6px; padding: 6px 0 0 3px; }
.row { display: flex; align-items: center; height: 14px; }
.t { display: flex; align-items: center; }
.combo { display: flex; align-items: center; justify-content: space-between; height: 14px; background: #fff; border: 1px solid #d4d4d4; }
.combo .dd { margin-right: 2px; }
.combo select { appearance: none; flex: 1; min-width: 0; height: 12px; line-height: 12px; padding-left: 1px; color: #999; opacity: 1; outline: 0; }
.face { width: 59px; }
.size { width: 33px; margin-left: -1px; }
.grow, .shrink { width: 14px; }
.grow { font-size: 10px; margin-left: 5px; }
.t sup { font-size: 5px; line-height: 5px; align-self: flex-start; }
.clear { margin-left: 5px; }
.mark { width: 14px; justify-content: center; }
.strike { width: 15px; margin-left: 1px; }
.menu-btn { width: 20px; }
.color { margin-left: 6px; }
.marks u { text-underline-offset: 1px; }
.vr { width: 1px; height: 12px; background: #d4d4d4; }
.g-para .vr { margin: 0 1px; }
.g-para .row { gap: 4px; padding-left: 2px; }
.g-para .row .dd { margin-left: 3px; }
.collapse { position: absolute; right: 6px; bottom: 3px; color: #666; }

.menu {
  position: absolute;
  z-index: 5;
  top: 3px;
  left: 2px;
  width: 167px;
  padding: 1px 12px 6px 0;
  background: #fff;
  border: 1px solid #c6c6c6;
  box-shadow: 1px 1px 3px rgba(0, 0, 0, .25);
  color: var(--ink);
}
.menu h3 { height: 12px; line-height: 12px; padding-left: 7px; background: #e9e9e9; }
.shapes { display: grid; grid-template-columns: repeat(12, 1fr); grid-auto-rows: 13px; padding: 2px 0 1px 1px; }
.shapes.tall { padding-bottom: 0; }
.shape { position: relative; display: flex; align-items: center; justify-content: center; color: #777; }
.shape svg { stroke-width: .8px; }
.marked::after {
  content: "";
  position: absolute;
  z-index: 2;
  top: -4px;
  left: -3px;
  width: 20px;
  height: 22px;
  border: 3px solid #c8101c;
}
.grip { position: absolute; right: 2px; bottom: 2px; color: #999; }

.work { display: flex; flex: 1; min-height: 0; }
.thumbs { display: flex; align-items: flex-start; width: 158px; padding: 10px 14px 0 8px; border-right: 1px solid #dcdcdc; }
.num { width: 8px; font-size: 10px; line-height: 10px; color: var(--brand); }
.thumb { flex: 1; aspect-ratio: 128 / 74; background: #fff; border: 2px solid var(--brand); }
.slide {
  display: flex;
  flex-direction: column;
  gap: 2px;
  flex: 1;
  margin: 11px 23px 0 13px;
  padding: 65px 88px 0;
  background: #fff;
  border: solid #d0d0d0;
  border-width: 1px 1px 0 1px;
}
.holder { display: flex; justify-content: center; border: 1px dotted #8c8c8c; color: #000; white-space: nowrap; }
.title { align-items: flex-end; height: 144px; font-size: 45px; line-height: 60px; font-weight: 300; }
.subtitle { height: 101px; font-size: 18px; line-height: 24px; font-weight: 300; }
```
